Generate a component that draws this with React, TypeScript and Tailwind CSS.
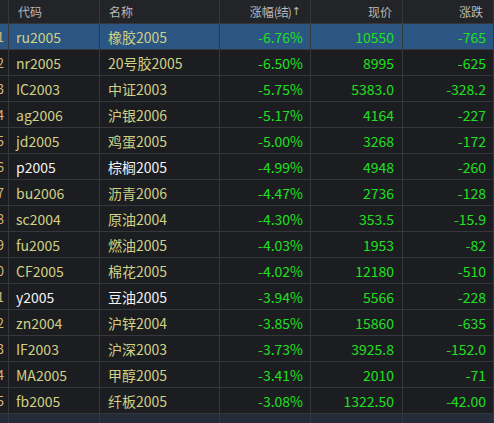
const rows = [
  { code: 'ru2005', name: '橡胶2005', pct: '-6.76%', price: '10550', diff: '-765', white: false },
  { code: 'nr2005', name: '20号胶2005', pct: '-6.50%', price: '8995', diff: '-625', white: false },
  { code: 'IC2003', name: '中证2003', pct: '-5.75%', price: '5383.0', diff: '-328.2', white: false },
  { code: 'ag2006', name: '沪银2006', pct: '-5.17%', price: '4164', diff: '-227', white: false },
  { code: 'jd2005', name: '鸡蛋2005', pct: '-5.00%', price: '3268', diff: '-172', white: false },
  { code: 'p2005', name: '棕榈2005', pct: '-4.99%', price: '4948', diff: '-260', white: true },
  { code: 'bu2006', name: '沥青2006', pct: '-4.47%', price: '2736', diff: '-128', white: false },
  { code: 'sc2004', name: '原油2004', pct: '-4.30%', price: '353.5', diff: '-15.9', white: false },
  { code: 'fu2005', name: '燃油2005', pct: '-4.03%', price: '1953', diff: '-82', white: false },
  { code: 'CF2005', name: '棉花2005', pct: '-4.02%', price: '12180', diff: '-510', white: false },
  { code: 'y2005', name: '豆油2005', pct: '-3.94%', price: '5566', diff: '-228', white: true },
  { code: 'zn2004', name: '沪锌2004', pct: '-3.85%', price: '15860', diff: '-635', white: false },
  { code: 'IF2003', name: '沪深2003', pct: '-3.73%', price: '3925.8', diff: '-152.0', white: false },
  { code: 'MA2005', name: '甲醇2005', pct: '-3.41%', price: '2010', diff: '-71', white: false },
  { code: 'fb2005', name: '纤板2005', pct: '-3.08%', price: '1322.50', diff: '-42.00', white: false },
]

const cell = 'h-full flex items-center border-r border-[#36373b] overflow-hidden whitespace-nowrap'

export default function App() {
  return (
    <div
      className="w-[494px] h-[423px] overflow-hidden bg-[#1c1d21] text-[14px] leading-none"
      style={{ fontFamily: '"Noto Sans CJK SC", "Noto Sans", sans-serif' }}
    >
      {/* header */}
      <div className="flex h-[24px] bg-[#232428] border-b border-[#36373b] text-[#b9b9b9] text-[12px]">
        <div className={`${cell} w-[9px]`} />
        <div className={`${cell} w-[91px] pl-[9px]`}>代码</div>
        <div className={`${cell} w-[120px] pl-[9px]`}>名称</div>
        <div className={`${cell} w-[91px] justify-end pr-[9px]`}>
          涨幅<span className="tracking-[-1px]">(结)</span>
          <span className="ml-[1px] font-['DejaVu_Sans',sans-serif] text-[11px]">↑</span>
        </div>
        <div className={`${cell} w-[92px] justify-end pr-[10px]`}>现价</div>
        <div className={`${cell} w-[91px] justify-end pr-[10px]`}>涨跌</div>
      </div>

      {rows.map((r, i) => {
        const txt = r.white ? 'text-[#f2f2f2]' : 'text-[#d0d184]'
        return (
          <div
            key={r.code}
            className={`flex h-[26px] border-b border-[#36373b] ${i === 0 ? 'bg-[#2b5582]' : ''}`}
          >
            {/* row numbers, scrolled off the left edge */}
            <div className={`${cell} w-[9px] justify-end pr-[4px] text-[#d8b878] text-[13px]`}>
              <span className="shrink-0">{i + 1}</span>
            </div>
            <div className={`${cell} w-[91px] pl-[7px] ${txt}`}>{r.code}</div>
            <div className={`${cell} w-[120px] pl-[8px] ${txt}`}>{r.name}</div>
            <div className={`${cell} w-[91px] justify-end pr-[7px] text-[#1fe01f]`}>{r.pct}</div>
            <div className={`${cell} w-[92px] justify-end pr-[8px] text-[#1fe01f]`}>{r.price}</div>
            <div className={`${cell} w-[91px] justify-end pr-[7px] text-[#1fe01f]`}>{r.diff}</div>
          </div>
        )
      })}

      {/* empty trailing strip */}
      <div className="flex h-[9px] bg-[#242c39]">
        <div className={`${cell} w-[9px]`} />
        <div className={`${cell} w-[91px]`} />
        <div className={`${cell} w-[120px]`} />
        <div className={`${cell} w-[91px]`} />
        <div className={`${cell} w-[92px]`} />
        <div className={`${cell} w-[91px]`} />
      </div>
    </div>
  )
}
